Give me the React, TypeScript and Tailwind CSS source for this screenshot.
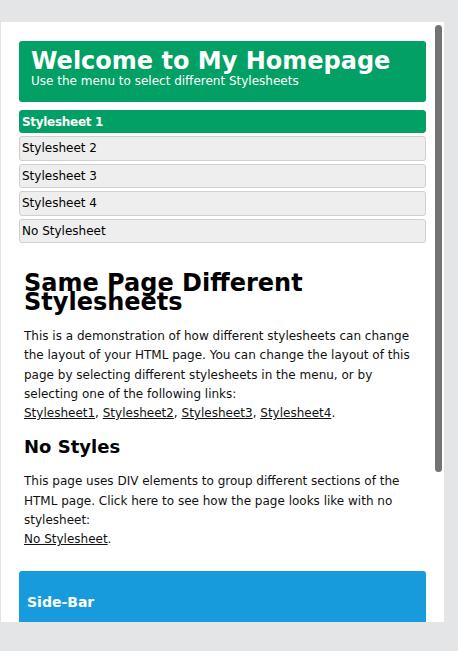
import React from 'react';

const menuItems = ['Stylesheet 1', 'Stylesheet 2', 'Stylesheet 3', 'Stylesheet 4', 'No Stylesheet'];

export default function App() {
  return (
    <div className="min-h-screen bg-[#e4e5e7] pl-px pt-[22px] font-['DejaVu_Sans',Verdana,sans-serif] text-[#111]">
      <div className="relative h-[600px] w-[443px] overflow-hidden bg-white">
        <div className="px-[18px] pt-[19px]">
          {/* header */}
          <div className="h-[61px] rounded-[3px] bg-[#02a064] px-3 pt-[7px] text-white">
            <h1 className="text-[24px] font-bold leading-[26px]">Welcome to My Homepage</h1>
            <p className="text-[12px] leading-[14px]">Use the menu to select different Stylesheets</p>
          </div>

          {/* menu */}
          <ul className="mt-[8px] flex flex-col gap-[3px]">
            {menuItems.map((item, i) => (
              <li
                key={item}
                className={
                  i === 0
                    ? 'flex h-[23px] items-center rounded-[3px] border border-[#02a064] bg-[#02a064] px-[2px] text-[12px] font-bold tracking-[-0.3px] text-white'
                    : 'flex h-[24.5px] items-center rounded-[3px] border border-[#cfcfcf] bg-[#eeeeee] px-[2px] text-[12px] text-black'
                }
              >
                {item}
              </li>
            ))}
          </ul>

          {/* main */}
          <div className="px-[5px] pt-[31px]">
            <h2 className="text-[24px] font-bold leading-[19px] text-black">
              Same Page Different Stylesheets
            </h2>
            <p className="mt-[15px] text-[12px] leading-[19.3px]">
              This is a demonstration of how different stylesheets can change the layout of your HTML page. You can
              change the layout of this page by selecting different stylesheets in the menu, or by selecting one of the
              following links:
              <br />
              <a className="underline">Stylesheet1</a>, <a className="underline">Stylesheet2</a>,{' '}
              <a className="underline">Stylesheet3</a>, <a className="underline">Stylesheet4</a>.
            </p>
            <h3 className="mt-[12px] text-[18px] font-bold leading-[24px] text-black">No Styles</h3>
            <p className="mt-[13px] text-[12px] leading-[19.3px]">
              This page uses DIV elements to group different sections of the HTML page. Click here to see how the page
              looks like with no stylesheet:
              <br />
              <a className="underline">No Stylesheet</a>.
            </p>
          </div>

          {/* side bar */}
          <div className="mt-[21px] h-[80px] rounded-t-[3px] bg-[#179bdd] px-2 pt-[22px] text-white">
            <h3 className="text-[14px] font-bold leading-[18px]">Side-Bar</h3>
          </div>
        </div>
        <div className="absolute right-[2px] top-[3px] h-[447px] w-[7px] rounded-full bg-[#737373]" />
      </div>
    </div>
  );
}
